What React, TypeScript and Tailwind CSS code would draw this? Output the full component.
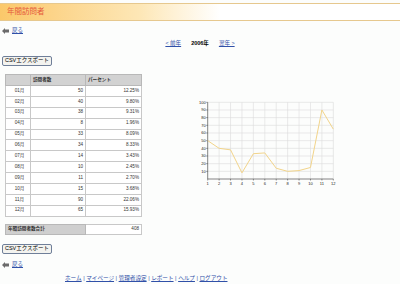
import React from "react";

const rows = [
  ["01月", 50, "12.25%"],
  ["02月", 40, "9.80%"],
  ["03月", 38, "9.31%"],
  ["04月", 8, "1.96%"],
  ["05月", 33, "8.09%"],
  ["06月", 34, "8.33%"],
  ["07月", 14, "3.43%"],
  ["08月", 10, "2.45%"],
  ["09月", 11, "2.70%"],
  ["10月", 15, "3.68%"],
  ["11月", 90, "22.06%"],
  ["12月", 65, "15.93%"],
] as const;

const font = { fontFamily: '"Liberation Sans", "Noto Sans CJK JP", sans-serif' };

const BackLink = () => (
  <div className="flex items-center gap-[3px] pl-[2px] h-[10px]">
    <svg width="7" height="6" viewBox="0 0 7 6">
      <path d="M0 3 L3 0 L3 1.6 L7 1.6 L7 4.4 L3 4.4 L3 6 Z" fill="#6b6b6b" />
    </svg>
    <a className="text-[5.5px] text-[#3050a8] underline leading-none">戻る</a>
  </div>
);

const CsvButton = () => (
  <button className="h-[10px] w-[50px] ml-[2px] border border-[#6f7f99] rounded-[2px] bg-[#f3f3ef] text-[5.5px] leading-none text-black flex items-center justify-center">
    CSVエクスポート
  </button>
);

const Chart = () => {
  const x0 = 11.7;
  const step = 11.42;
  const yb = 82;
  const unit = 0.767;
  const values = rows.map((r) => r[1]);
  const pts = values.map((v, i) => `${x0 + i * step},${yb - v * unit}`).join(" ");
  const right = x0 + 11 * step;
  return (
    <svg width="144" height="92" viewBox="0 0 144 92">
      {Array.from({ length: 10 }, (_, k) => {
        const v = (k + 1) * 10;
        const y = yb - v * unit;
        return (
          <g key={v}>
            <line x1={x0} x2={right} y1={y} y2={y} stroke="#dcdcdc" strokeWidth="0.6" />
            <line x1={x0 - 1.5} x2={x0} y1={y} y2={y} stroke="#333" strokeWidth="0.5" />
            <text x={x0 - 2} y={y + 1.4} fontSize="4" textAnchor="end" fill="#222" style={font}>
              {v}
            </text>
          </g>
        );
      })}
      {values.map((_, i) => {
        const x = x0 + i * step;
        return (
          <g key={i}>
            {i > 0 && (
              <line x1={x} x2={x} y1={yb - 100 * unit} y2={yb} stroke="#dcdcdc" strokeWidth="0.6" />
            )}
            <line x1={x} x2={x} y1={yb} y2={yb + 1.5} stroke="#333" strokeWidth="0.5" />
            <text x={x} y={yb + 6} fontSize="4" textAnchor="middle" fill="#222" style={font}>
              {i + 1}
            </text>
          </g>
        );
      })}
      <line x1={x0} x2={x0} y1={yb - 100 * unit} y2={yb} stroke="#333" strokeWidth="0.6" />
      <line x1={x0} x2={right} y1={yb} y2={yb} stroke="#333" strokeWidth="0.6" />
      <polyline points={pts} fill="none" stroke="#f2d48a" strokeWidth="1" />
    </svg>
  );
};

export default function App() {
  return (
    <div className="w-[400px] h-[284px] bg-[#fcfdfc] overflow-hidden text-[#333]" style={font}>
      <div className="mt-[3px] h-[18px] border-y border-[#e6c88e] bg-linear-to-r from-[#fbc86a] via-[#fde7b6] via-35% to-white to-55% flex items-center pl-[7px]">
        <span className="text-[7.5px] text-[#e5593a] leading-none">年間訪問者</span>
      </div>

      <div className="mt-[5px]">
        <BackLink />
      </div>

      <div className="mt-[4px] flex justify-center items-center gap-[10px] text-[5.5px] leading-none h-[8px]">
        <a className="text-[#3050a8] underline">&lt; 前年</a>
        <span className="font-bold text-black">2006年</span>
        <a className="text-[#3050a8] underline">翌年 &gt;</a>
      </div>

      <div className="mt-[8px]">
        <CsvButton />
      </div>

      <div className="mt-[8px] flex items-start">
        <div className="ml-[5px] w-[137px]">
          <table className="w-full border-collapse border border-[#a8a8a8] text-[4.6px] leading-none">
            <thead>
              <tr className="h-[11px] bg-[#d2d2d2]">
                <th className="w-[25px] border border-[#b8b8b8]"></th>
                <th className="w-[55px] border border-[#b8b8b8] text-left pl-[2px] font-bold text-[#333]">訪問者数</th>
                <th className="border border-[#b8b8b8] text-left pl-[2px] font-bold text-[#333]">パーセント</th>
              </tr>
            </thead>
            <tbody>
              {rows.map(([m, n, p]) => (
                <tr key={m} className="h-[10.9px] bg-white">
                  <td className="border border-[#c8c8c8] text-center pl-[3px]">{m}</td>
                  <td className="border border-[#c8c8c8] text-right pr-[2px]">{n}</td>
                  <td className="border border-[#c8c8c8] text-right pr-[2px]">{p}</td>
                </tr>
              ))}
            </tbody>
          </table>
          <table className="w-full mt-[7px] border-collapse border border-[#a8a8a8] text-[4.6px] leading-none">
            <tbody>
              <tr className="h-[10px]">
                <td className="w-[80px] bg-[#cfcfcf] border border-[#b8b8b8] pl-[2px] font-bold">年間訪問者数合計</td>
                <td className="bg-white border border-[#c8c8c8] text-right pr-[2px]">408</td>
              </tr>
            </tbody>
          </table>
        </div>
        <div className="ml-[54px] mt-[23px]">
          <Chart />
        </div>
      </div>

      <div className="mt-[9px]">
        <CsvButton />
      </div>

      <div className="mt-[6px]">
        <BackLink />
      </div>

      <div className="mt-[6px] ml-[65px] text-[5.6px] leading-none text-[#3050a8] whitespace-nowrap">
        <a className="underline">ホーム</a> | <a className="underline">マイページ</a> |{" "}
        <a className="underline">管理者設定</a> | <a className="underline">レポート</a> |{" "}
        <a className="underline">ヘルプ</a> | <a className="underline">ログアウト</a>
      </div>
    </div>
  );
}
